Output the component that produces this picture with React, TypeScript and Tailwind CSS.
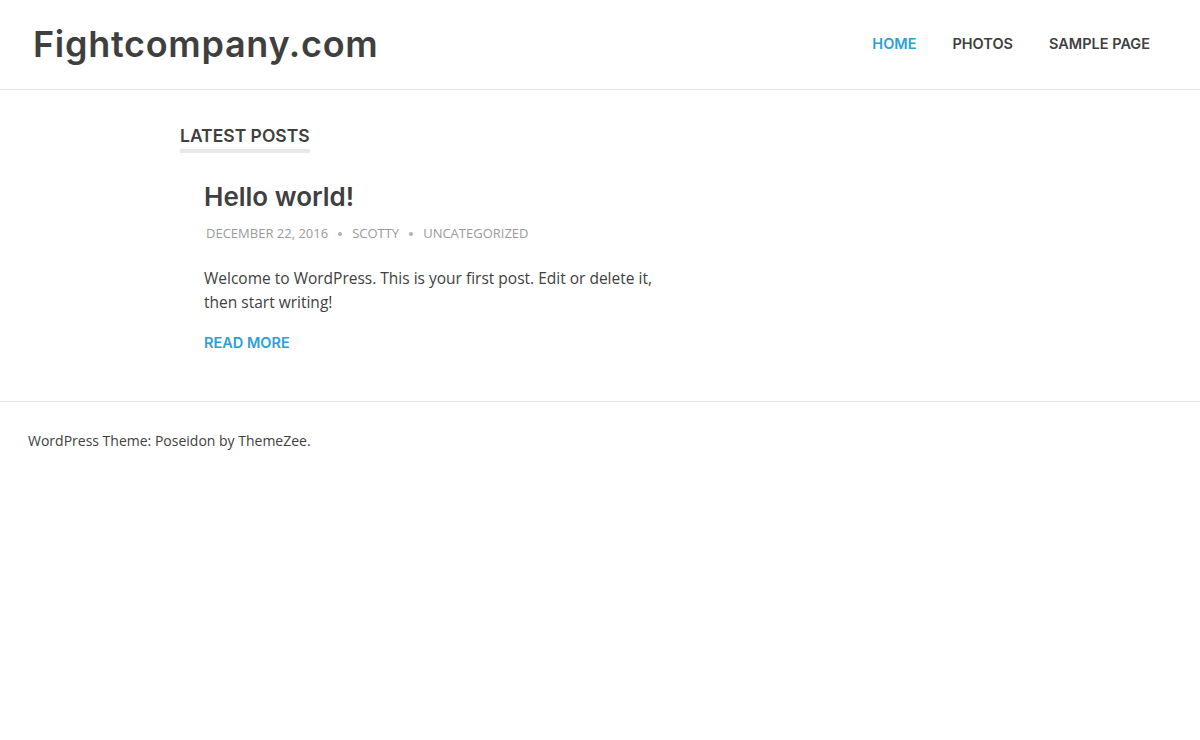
import React from "react";

export default function App() {
  const head = { fontFamily: "Inter, Lato, 'Liberation Sans', sans-serif" };
  const body = { fontFamily: "'Open Sans', 'Noto Sans', sans-serif" };
  return (
    <div className="min-h-[740px] bg-white text-[#404040]" style={body}>
      <header className="h-[90px] border-b border-[#e5e5e5] flex items-center justify-between pl-[33px] pr-[50px]">
        <div className="text-[36px] font-semibold text-[#3f3f3f] tracking-[0.7px] leading-none -mt-[2px]" style={head}>
          Fightcompany.com
        </div>
        <nav className="flex gap-[36px] text-[14.5px] font-semibold uppercase -mt-[2px]" style={head}>
          <span className="text-[#2b9fd6]">Home</span>
          <span className="text-[#3f3f3f]">Photos</span>
          <span className="text-[#3f3f3f]">Sample Page</span>
        </nav>
      </header>

      <main className="pl-[180px] pt-[34px] pb-[48px]">
        <div className="inline-block border-b-4 border-[#e8e8e8] pb-[2px]">
          <h2 className="text-[17.5px] font-semibold uppercase text-[#3f3f3f] leading-[22px]" style={head}>
            Latest Posts
          </h2>
        </div>

        <article className="pl-[24px] pt-[27px] w-[500px]">
          <h1 className="text-[26px] font-semibold text-[#3f3f3f] leading-[34px]" style={head}>
            Hello world!
          </h1>
          <div className="mt-[10px] flex items-center text-[13px] uppercase text-[#9a9a9a] pl-[2px]">
            <span>December 22, 2016</span>
            <span className="mx-[10px] w-[4px] h-[4px] rounded-full bg-[#b0b0b0]"></span>
            <span>Scotty</span>
            <span className="mx-[10px] w-[4px] h-[4px] rounded-full bg-[#b0b0b0]"></span>
            <span>Uncategorized</span>
          </div>
          <p className="mt-[22px] text-[15.5px] leading-[24px] text-[#404040]">
            Welcome to WordPress. This is your first post. Edit or delete it,
            <br />
            then start writing!
          </p>
          <div className="mt-[18px] text-[14.5px] font-semibold uppercase text-[#2b9fd6]" style={head}>
            Read More
          </div>
        </article>
      </main>

      <footer className="border-t border-[#e5e5e5] pl-[28px] pt-[28px]">
        <p className="text-[14px] text-[#404040]">WordPress Theme: Poseidon by ThemeZee.</p>
      </footer>
    </div>
  );
}
